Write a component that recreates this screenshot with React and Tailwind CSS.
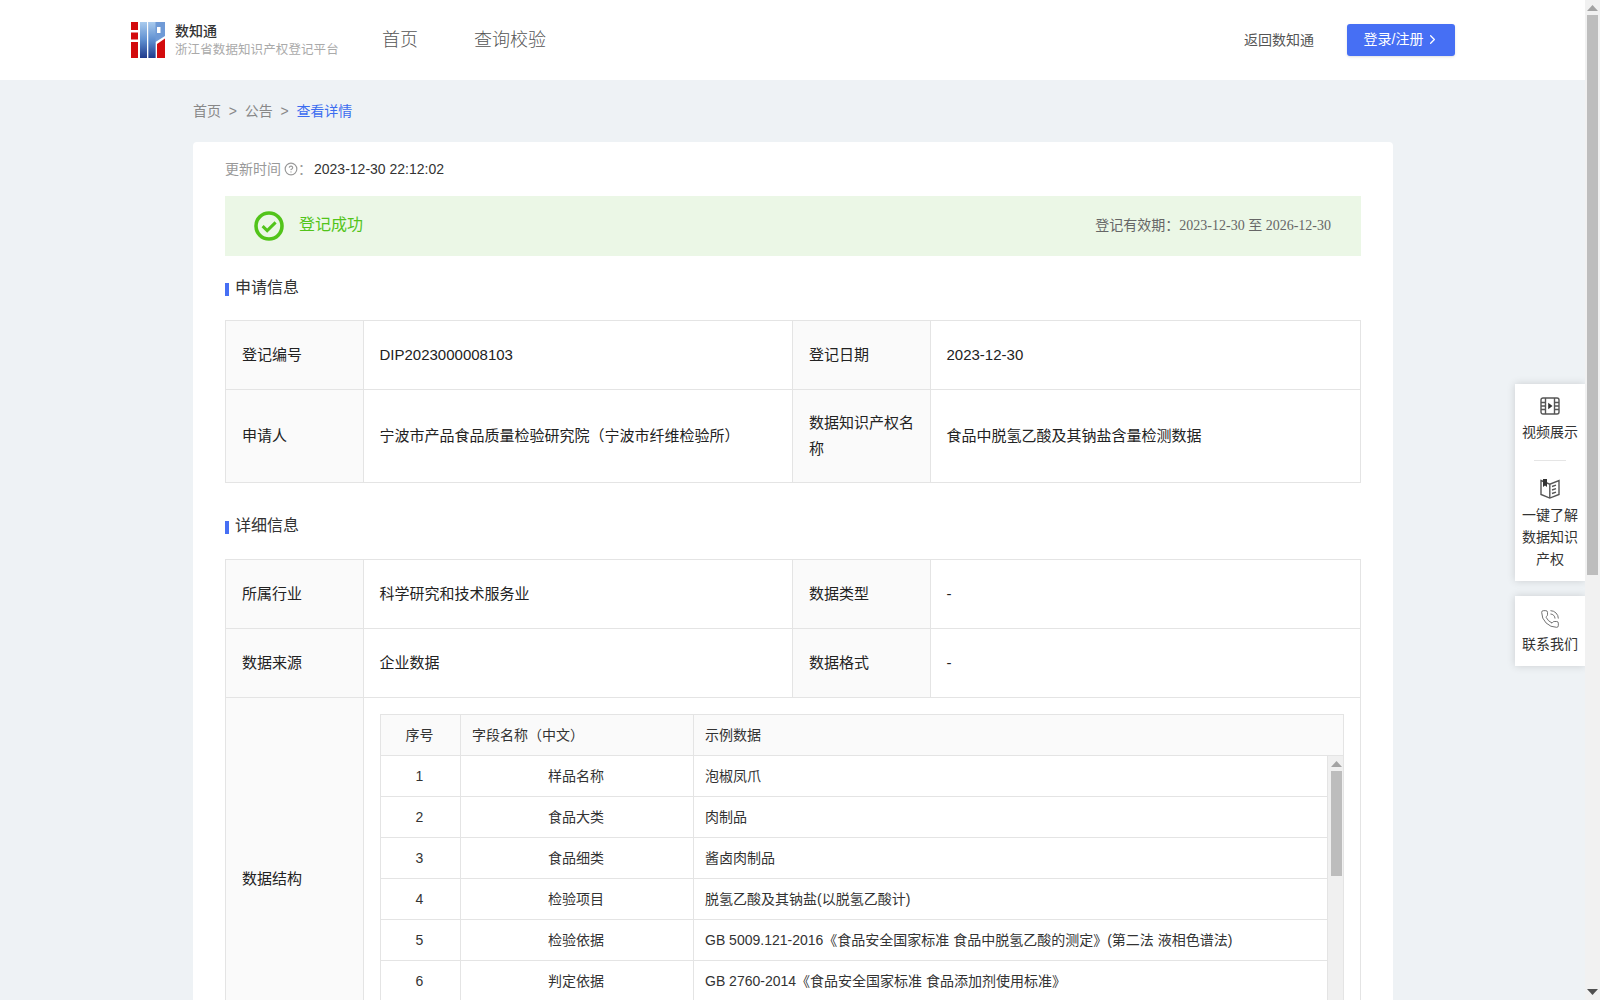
import React from "react";
import { ChevronRight, CircleHelp, PhoneCall } from "lucide-react";

const fieldRows = [
  { id: 1, name: "样品名称", sample: "泡椒凤爪" },
  { id: 2, name: "食品大类", sample: "肉制品" },
  { id: 3, name: "食品细类", sample: "酱卤肉制品" },
  { id: 4, name: "检验项目", sample: "脱氢乙酸及其钠盐(以脱氢乙酸计)" },
  { id: 5, name: "检验依据", sample: "GB 5009.121-2016《食品安全国家标准 食品中脱氢乙酸的测定》(第二法 液相色谱法)" },
  { id: 6, name: "判定依据", sample: "GB 2760-2014《食品安全国家标准 食品添加剂使用标准》" },
];

const labelCell = "border border-[#e4e4e4] bg-[#fafafa] pl-4 pr-3 align-middle text-[15px] text-[#222] leading-[26px]";
const valueCell = "border border-[#e4e4e4] pl-[15.500px] pr-4 align-middle text-[15px] text-[#222]";

const Logo = () => (
  <svg width="34" height="36" viewBox="0 0 34 36" className="shrink-0">
    <defs>
      <linearGradient id="logoBlue" x1="0" y1="0" x2="0" y2="1">
        <stop offset="0" stopColor="#a9cbee" />
        <stop offset="0.5" stopColor="#5f8fd0" />
        <stop offset="1" stopColor="#1f3a8c" />
      </linearGradient>
    </defs>
    <path d="M0 0h7v8H0zM0 10.500h7v7H0zM0 20h7v16H0z" fill="#d30b0d" />
    <path d="M9 0h7v36H9z" fill="url(#logoBlue)" />
    <path d="M17.500 0H34v14l-9.500 6v16h-7z" fill="#6f9ad6" />
    <path d="M17.500 0h7v36h-7z" fill="url(#logoBlue)" />
    <path d="M26 5h3.500v6H26z" fill="#fff" />
    <path d="M26 22l8-5.500V36h-8z" fill="#d30b0d" />
  </svg>
);

const SuccessIcon = () => (
  <svg width="30" height="30" viewBox="0 0 30 30" className="shrink-0">
    <circle cx="15" cy="15" r="13" fill="none" stroke="#52c41a" strokeWidth="3.600" />
    <path d="M8.600 15.200l4.600 4.400 8.400-8.200" fill="none" stroke="#52c41a" strokeWidth="3" />
  </svg>
);

const FilmIcon = () => (
  <svg width="20" height="18" viewBox="0 0 20 18" fill="none" stroke="#555" strokeWidth="1.400">
    <rect x="1" y="1" width="18" height="16" rx="2" />
    <path d="M5.500 1v16M14.500 1v16M1 5.500h4.500M1 9h4.500M1 12.500h4.500M14.500 5.500H19M14.500 9H19M14.500 12.500H19" />
    <path d="M8.200 5.800l4.300 3.200-4.300 3.200z" fill="#333" stroke="none" />
  </svg>
);

const BookIcon = () => (
  <svg width="20" height="21" viewBox="0 0 20 21" fill="none" stroke="#555" strokeWidth="1.400">
    <path d="M1 2.500l8.800 3.700L19 2.500v14l-9.200 3.600L1 16.500z" />
    <path d="M9.800 6.200V20M12 8.500l4-1.400M12 12l4-1.400M12 15.500l4-1.400" />
    <path d="M3 1h4v8l-2-1.400L3 9z" fill="#333" stroke="none" />
  </svg>
);

const ScrollArrow = ({ down }) => (
  <svg width="11" height="6" viewBox="0 0 11 6" fill={down ? "#505050" : "#a3a3a3"}>
    <path d={down ? "M0 0h11L5.500 6z" : "M5.500 0L11 6H0z"} />
  </svg>
);

const SectionTitle = ({ children, className }) => (
  <div className={`flex h-5 items-center gap-[6px] text-base text-[#333] ${className}`}>
    <span className="mt-[2px] h-[13px] w-1 bg-[#466ff4]"></span>
    {children}
  </div>
);

const Colgroup = () => (
  <colgroup>
    <col className="w-[138px]" />
    <col className="w-[429px]" />
    <col className="w-[138px]" />
    <col className="w-[430px]" />
  </colgroup>
);

const FieldTable = () => (
  <div className="h-[330px] w-[964px] border-l border-r border-t border-[#e4e4e4] text-sm text-[#333]">
    <div className="flex h-[41px] border-b border-[#e4e4e4] bg-[#fafafa]">
      <div className="flex w-[80px] items-center justify-center border-r border-[#e4e4e4] pr-[2px]">序号</div>
      <div className="flex w-[233px] items-center border-r border-[#e4e4e4] pl-[11px]">字段名称（中文）</div>
      <div className="flex flex-1 items-center pl-[11px]">示例数据</div>
    </div>
    <div className="flex h-[288px]">
      <div className="flex-1">
        {fieldRows.map((row) => (
          <div key={row.id} className="flex h-[41px] border-b border-[#e4e4e4]">
            <div className="flex w-[80px] items-center justify-center border-r border-[#e4e4e4] pr-[2px]">{row.id}</div>
            <div className="flex w-[233px] items-center justify-center border-r border-[#e4e4e4] pr-[2px]">{row.name}</div>
            <div className="flex flex-1 items-center pl-[11px]">{row.sample}</div>
          </div>
        ))}
      </div>
      <div className="flex w-[16px] flex-col items-center border-l border-[#e4e4e4] bg-[#f0f0f0] pl-[2px] pt-[5px]">
        <ScrollArrow />
        <div className="mt-[4px] h-[105px] w-[11px] bg-[#bdbdbd]"></div>
      </div>
    </div>
  </div>
);

export default function App() {
  return (
    <div className="flex h-[1000px] overflow-hidden bg-[#eef2f5] font-['Liberation_Sans','Noto_Sans_CJK_SC',sans-serif] text-sm">
      <div className="relative flex-1 overflow-hidden">
        <header className="flex h-20 items-center bg-white pl-[131px] pr-[130px]">
          <Logo />
          <div className="ml-[10px] w-[198px]">
            <div className="text-sm font-medium leading-5 text-[#333]">数知通</div>
            <div className="text-[12.500px] leading-[18px] tracking-[0.1px] text-[#aaa]">浙江省数据知识产权登记平台</div>
          </div>
          <nav className="ml-[9px] flex gap-14 text-lg font-light text-[#555]">
            <span>首页</span>
            <span>查询校验</span>
          </nav>
          <span className="ml-auto text-[#555]">返回数知通</span>
          <button className="ml-[33px] flex h-8 w-[108px] items-center justify-center gap-[2px] rounded-[3px] bg-[#466ff4] pb-[2px] pl-[2px] text-white shadow-sm">
            登录/注册
            <ChevronRight size={15} className="mt-[1px]" />
          </button>
        </header>

        <main className="ml-[193px] w-[1200px]">
          <div className="flex h-[62px] items-center gap-[7.750px] pb-[1px] text-[#888]">
            <span>首页</span>
            <span>&gt;</span>
            <span>公告</span>
            <span>&gt;</span>
            <span className="text-[#3c6df0]">查看详情</span>
          </div>

          <section className="rounded bg-white px-8 pt-[17px]">
            <div className="flex h-5 items-center text-[#999]">
              更新时间
              <CircleHelp size={14} className="ml-[3px] text-[#999]" />
              <span>：</span>
              <span className="ml-[2px] text-[#333]">2023-12-30 22:12:02</span>
            </div>

            <div className="mt-[17px] flex h-[60px] items-center bg-[#ebf7e6] pb-[1px] pl-[29px] pr-[30px]">
              <SuccessIcon />
              <span className="ml-[15px] mb-[1px] text-base text-[#52c41a]">登记成功</span>
              <span className="ml-auto mb-[1px] text-[#666]">
                登记有效期：<span className="font-['Liberation_Serif','Noto_Sans_CJK_SC',serif]">2023-12-30 至 2026-12-30</span>
              </span>
            </div>

            <SectionTitle className="mt-[22px] mb-[22px]">申请信息</SectionTitle>
            <table className="w-[1135px] table-fixed border-collapse">
              <Colgroup />
              <tbody>
                <tr className="h-[69px]">
                  <td className={labelCell}>登记编号</td>
                  <td className={valueCell}>DIP2023000008103</td>
                  <td className={labelCell}>登记日期</td>
                  <td className={valueCell}>2023-12-30</td>
                </tr>
                <tr className="h-[93px]">
                  <td className={labelCell}>申请人</td>
                  <td className={valueCell}>宁波市产品食品质量检验研究院（宁波市纤维检验所）</td>
                  <td className={labelCell}>数据知识产权名称</td>
                  <td className={valueCell}>食品中脱氢乙酸及其钠盐含量检测数据</td>
                </tr>
              </tbody>
            </table>

            <SectionTitle className="mt-[33px] mb-[23px]">详细信息</SectionTitle>
            <table className="w-[1135px] table-fixed border-collapse">
              <Colgroup />
              <tbody>
                <tr className="h-[69px]">
                  <td className={labelCell}>所属行业</td>
                  <td className={valueCell}>科学研究和技术服务业</td>
                  <td className={labelCell}>数据类型</td>
                  <td className={valueCell}>-</td>
                </tr>
                <tr className="h-[69px]">
                  <td className={labelCell}>数据来源</td>
                  <td className={valueCell}>企业数据</td>
                  <td className={labelCell}>数据格式</td>
                  <td className={valueCell}>-</td>
                </tr>
                <tr className="h-[362px]">
                  <td className={labelCell}>数据结构</td>
                  <td className="border border-[#e4e4e4] px-4 align-middle" colSpan={3}>
                    <FieldTable />
                  </td>
                </tr>
              </tbody>
            </table>
          </section>
        </main>

        <aside className="absolute right-0 top-[384px] flex w-[70px] flex-col gap-[15px] text-center leading-[22px] text-[#333]">
          <div className="flex h-[197px] flex-col items-center bg-white pt-[13px] shadow-[0_0_8px_rgba(0,0,0,0.15)]">
            <FilmIcon />
            <div className="mt-[6px]">视频展示</div>
            <div className="mt-[17px] mb-[17px] h-px w-8 bg-[#e5e5e5]"></div>
            <BookIcon />
            <div className="mt-[5px] w-14">一键了解数据知识产权</div>
          </div>
          <div className="flex h-[70px] flex-col items-center bg-white pt-[13px] shadow-[0_0_8px_rgba(0,0,0,0.15)]">
            <PhoneCall size={20} strokeWidth={1.100} className="text-[#666]" />
            <div className="mt-[4px]">联系我们</div>
          </div>
        </aside>
      </div>

      <div className="flex w-[15px] flex-col items-center bg-[#f1f1f1] pt-[5px]">
        <ScrollArrow />
        <div className="mt-1 h-[560px] w-[11px] bg-[#bdbdbd]"></div>
        <div className="mt-auto mb-[5px]">
          <ScrollArrow down />
        </div>
      </div>
    </div>
  );
}
